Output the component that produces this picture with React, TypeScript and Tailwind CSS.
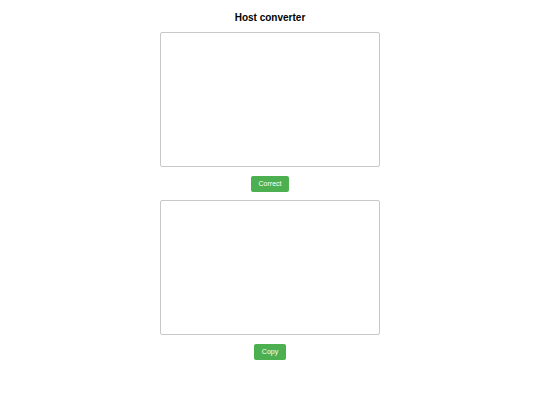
import { useState } from "react";

export default function App() {
  const [input, setInput] = useState("");
  const [output, setOutput] = useState("");

  return (
    <div className="flex min-h-screen flex-col items-center bg-white font-['Liberation_Sans',Arial,sans-serif] text-black">
      <h2 className="mt-[12px] text-[10px] font-bold leading-[12px]">Host converter</h2>
      <textarea
        value={input}
        onChange={(e) => setInput(e.target.value)}
        className="mt-[8px] h-[135px] w-[220px] resize-none rounded-[2px] border border-[#c8c8c8] bg-white outline-none"
      />
      <button
        onClick={() => setOutput(input.trim())}
        className="mt-[9px] h-[16px] rounded-[2px] bg-[#4caf50] px-[8px] text-[7px] leading-[16px] text-white"
      >
        Correct
      </button>
      <textarea
        value={output}
        readOnly
        className="mt-[8px] h-[135px] w-[220px] resize-none rounded-[2px] border border-[#c8c8c8] bg-white outline-none"
      />
      <button
        onClick={() => navigator.clipboard?.writeText(output)}
        className="mt-[9px] h-[16px] rounded-[2px] bg-[#4caf50] px-[8px] text-[7px] leading-[16px] text-white"
      >
        Copy
      </button>
    </div>
  );
}
